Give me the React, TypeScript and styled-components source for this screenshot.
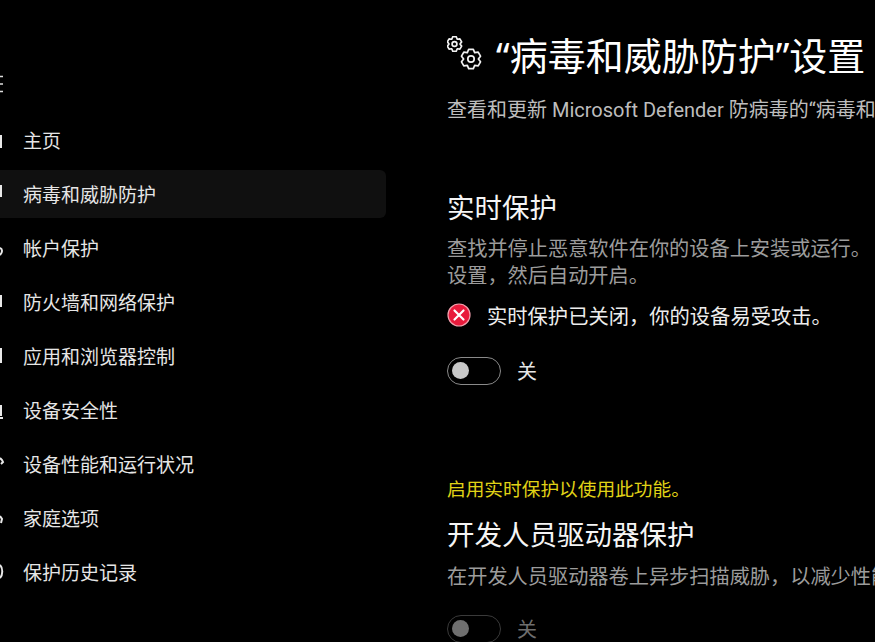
import React from "react";
import styled, { createGlobalStyle } from "styled-components";

const Global = createGlobalStyle`
  html, body { margin: 0; padding: 0; background: #000; }
  body { width: 875px; height: 642px; overflow: hidden; font-family: "Noto Sans", "Noto Sans CJK SC", sans-serif; }
`;

const Page = styled.div`
  width: 875px; height: 642px; display: flex; background: #000; overflow: hidden;
`;
const Sidebar = styled.nav`
  width: 386px; flex: none; padding-top: 75px; box-sizing: border-box;
  display: flex; flex-direction: column;
`;
const MenuIcon = styled.svg`
  width: 4px; height: 18px; display: block; margin-bottom: 23px; color: #ddd; flex: none;
`;
const Item = styled.div<{ $active?: boolean }>`
  height: 48px; margin-bottom: 6px; display: flex; align-items: center; gap: 8px;
  border-radius: 0 6px 6px 0; background: ${(p) => (p.$active ? "#101010" : "transparent")};
  color: #e6e6e6; font-size: 19px;
`;
const ItemIcon = styled.svg`
  width: 15px; height: 18px; flex: none; color: #e8e8e8;
`;
const Main = styled.main`
  flex: 1; min-width: 0; padding: 29px 0 0 61px; overflow: hidden; white-space: nowrap;
`;
const TitleRow = styled.div`
  display: flex; align-items: center; gap: 13px; height: 52px;
`;
const GearIcon = styled.svg`
  width: 36px; height: 38px; flex: none; margin-top: -1px;
`;
const Title = styled.h1`
  margin: 0; font-size: 38px; line-height: 52px; font-weight: 400; color: #fff;
`;
const Lead = styled.p`
  margin: 14px 0 0; font-family: Roboto, "Noto Sans CJK SC", sans-serif; font-size: 20px; line-height: 30px; color: #bdbdbd;
`;
const SectionTitle = styled.h2<{ $top: number }>`
  margin: ${(p) => p.$top}px 0 0; font-size: 27.5px; line-height: 36px; font-weight: 400; color: #f5f5f5;
`;
const Body = styled.p<{ $top: number }>`
  margin: ${(p) => p.$top}px 0 0; font-size: 20.2px; line-height: 27px; color: #9c9c9c;
`;
const Alert = styled.div`
  margin-top: 12px; height: 28px; display: flex; align-items: center; gap: 16px;
  font-size: 20.3px; color: #ededed;
`;
const AlertIcon = styled.svg`
  width: 24px; height: 24px; flex: none;
`;
const ToggleRow = styled.div<{ $top: number; $off?: boolean }>`
  margin-top: ${(p) => p.$top}px; display: flex; align-items: center; gap: 16px;
  font-size: 20px; color: ${(p) => (p.$off ? "#6e6e6e" : "#e6e6e6")};
`;
const Track = styled.div<{ $off?: boolean }>`
  width: 54px; height: 28px; box-sizing: border-box; border-radius: 14px; flex: none;
  border: 1.5px solid ${(p) => (p.$off ? "#3a3a3a" : "#8a8a8a")};
  display: flex; align-items: center; padding-left: 4px;
`;
const Knob = styled.div<{ $off?: boolean }>`
  width: 17px; height: 17px; border-radius: 50%;
  background: ${(p) => (p.$off ? "#6f6f6f" : "#c8c8c8")};
`;
const Hint = styled.p`
  margin: 91px 0 0; font-size: 18.7px; line-height: 26px; color: #e0d316;
`;

const gearPath = (() => {
  const pts: string[] = [];
  const lobes = 6;
  for (let i = 0; i < lobes; i++) {
    const a = (i / lobes) * Math.PI * 2 - Math.PI / 2;
    const step = Math.PI / lobes;
    const p = (ang: number, r: number) => `${(Math.cos(ang) * r).toFixed(2)} ${(Math.sin(ang) * r).toFixed(2)}`;
    pts.push(`${i === 0 ? "M" : "L"}${p(a - step * 0.45, 6.2)}`);
    pts.push(`L${p(a + step * 0.45, 6.2)}`);
    pts.push(`L${p(a + step, 4.6)}`);
  }
  return pts.join(" ") + "Z";
})();

const Gear = ({ x, y, s }: { x: number; y: number; s: number }) => (
  <g transform={`translate(${x} ${y}) scale(${s})`} fill="none" stroke="#f2f2f2" strokeWidth={1.7 / s} strokeLinejoin="round">
    <path d={gearPath} />
    <circle r={2} />
  </g>
);

const items = [
  "主页",
  "病毒和威胁防护",
  "帐户保护",
  "防火墙和网络保护",
  "应用和浏览器控制",
  "设备安全性",
  "设备性能和运行状况",
  "家庭选项",
  "保护历史记录",
];

const iconPaths = [
  "M1 4V17",
  "M1 0V12",
  "M0 9a3 3 0 0 1 2 3c0 2-1 3-2 4",
  "M1 2V14",
  "M1 1V16",
  "M1 4V15M0 17H3",
  "M0 3L2 5L3 7L1 9",
  "M0 7L2 10L1 14",
  "M0 2C3 5 3 12 0 15",
];

export default function App() {
  return (
    <Page>
      <Global />
      <Sidebar>
        <MenuIcon viewBox="0 0 4 18">
          <path d="M0 1.5H3M0 9H3M0 16.5H3" stroke="currentColor" strokeWidth="1.6" fill="none" />
        </MenuIcon>
        {items.map((t, i) => (
          <Item key={t} $active={i === 1}>
            <ItemIcon viewBox="0 0 15 18">
              <path d={iconPaths[i]} fill="none" stroke="currentColor" strokeWidth="2" />
            </ItemIcon>
            {t}
          </Item>
        ))}
      </Sidebar>
      <Main>
        <TitleRow>
          <GearIcon viewBox="0 0 36 38">
            <Gear x={7.5} y={8} s={1.2} />
            <Gear x={24} y={23} s={1.6} />
          </GearIcon>
          <Title>“病毒和威胁防护”设置</Title>
        </TitleRow>
        <Lead>查看和更新 Microsoft Defender 防病毒的“病毒和威胁防护”设置。</Lead>
        <SectionTitle $top={65}>实时保护</SectionTitle>
        <Body $top={9}>
          查找并停止恶意软件在你的设备上安装或运行。
          <br />
          设置，然后自动开启。
        </Body>
        <Alert>
          <AlertIcon viewBox="0 0 24 24">
            <circle cx="12" cy="12" r="11" fill="#e81b3c" stroke="#f3a0ad" strokeWidth="1.2" />
            <path d="M7.5 7.5l9 9M16.5 7.5l-9 9" stroke="#fff" strokeWidth="2.2" strokeLinecap="round" />
          </AlertIcon>
          实时保护已关闭，你的设备易受攻击。
        </Alert>
        <ToggleRow $top={27}>
          <Track><Knob /></Track>
          关
        </ToggleRow>
        <Hint>启用实时保护以使用此功能。</Hint>
        <SectionTitle $top={15}>开发人员驱动器保护</SectionTitle>
        <Body $top={10}>在开发人员驱动器卷上异步扫描威胁，以减少性能影响。</Body>
        <ToggleRow $top={24} $off>
          <Track $off><Knob $off /></Track>
          关
        </ToggleRow>
      </Main>
    </Page>
  );
}
